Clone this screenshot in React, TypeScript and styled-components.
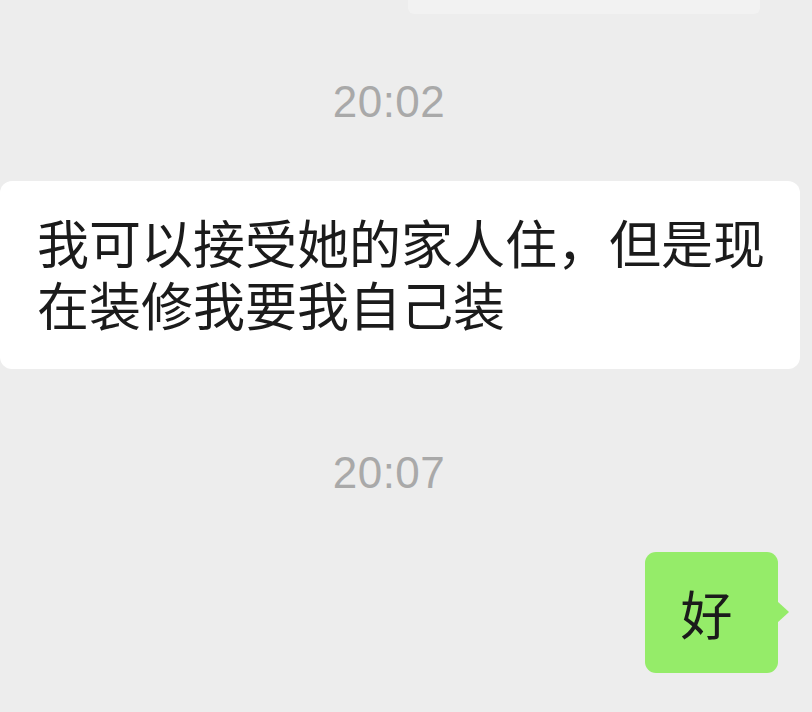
import React from 'react'
import styled, { createGlobalStyle } from 'styled-components'

const GlobalStyle = createGlobalStyle`
  html, body {
    margin: 0;
    padding: 0;
    background: #ededed;
  }
`

const Page = styled.div`
  width: 812px;
  height: 712px;
  overflow: hidden;
  background: #ededed;
  display: flex;
  flex-direction: column;
  font-family: 'Noto Sans CJK SC', 'Noto Sans', sans-serif;
`

const TopRemnant = styled.div`
  margin-left: 408px;
  width: 352px;
  height: 14px;
  background: #f2f2f2;
  border-radius: 0 0 6px 6px;
`

const TimeRow = styled.div<{ $gap: number }>`
  margin-top: ${p => p.$gap}px;
  padding-right: 34px;
  text-align: center;
  font-family: 'Liberation Sans', Arial, sans-serif;
  font-size: 44px;
  line-height: 50px;
  color: #a9a9a9;
  letter-spacing: 0.5px;
`

const Row = styled.div<{ $align: 'left' | 'right' }>`
  display: flex;
  justify-content: ${p => (p.$align === 'left' ? 'flex-start' : 'flex-end')};
  margin-top: 54px;
  padding-right: ${p => (p.$align === 'left' ? '12px' : '34px')};
`

const IncomingBubble = styled.div`
  width: 800px;
  box-sizing: border-box;
  padding: 30px 12px 34px 37px;
  background: #ffffff;
  border-radius: 12px;
  color: #1b1b1b;
  font-size: 52px;
  line-height: 62px;
`

const Line = styled.div`
  white-space: nowrap;
`

const OutgoingBubble = styled.div`
  position: relative;
  width: 133px;
  height: 121px;
  box-sizing: border-box;
  padding-right: 10px;
  display: flex;
  align-items: center;
  justify-content: center;
  background: #95ec69;
  border-radius: 11px;
  color: #1b1b1b;
  font-size: 52px;

  &::after {
    content: '';
    position: absolute;
    right: -11px;
    top: 49px;
    border-style: solid;
    border-width: 11px 0 11px 12px;
    border-color: transparent transparent transparent #95ec69;
  }
`

export default function App() {
  return (
    <Page>
      <GlobalStyle />
      <TopRemnant />
      <TimeRow $gap={63}>20:02</TimeRow>
      <Row $align="left">
        <IncomingBubble>
          <Line>我可以接受她的家人住，但是现</Line>
          <Line>在装修我要我自己装</Line>
        </IncomingBubble>
      </Row>
      <TimeRow $gap={79}>20:07</TimeRow>
      <Row $align="right">
        <OutgoingBubble>好</OutgoingBubble>
      </Row>
    </Page>
  )
}
